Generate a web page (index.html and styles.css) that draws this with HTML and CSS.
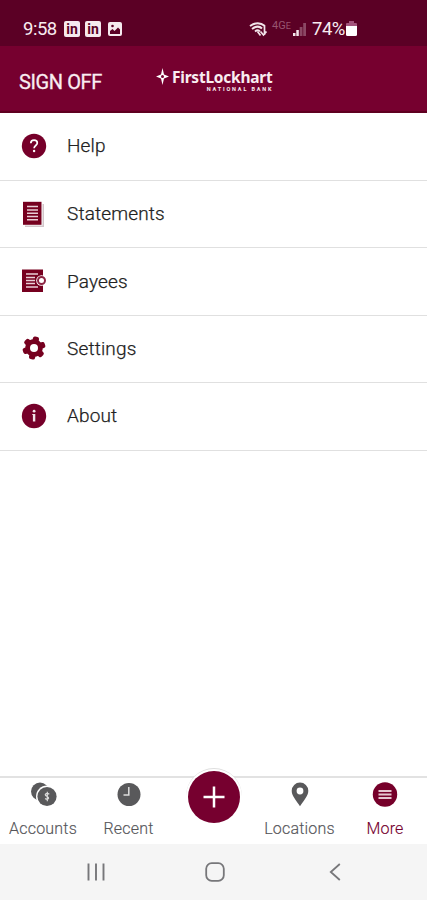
FILE: index.html
```html
<!DOCTYPE html>
<html lang="en">
<head>
<meta charset="utf-8">
<title>More</title>
<link rel="stylesheet" href="styles.css">
</head>
<body>
<div class="status">
  <div class="status-left">
    <span class="time">9:58</span>
    <span class="in-badge">in</span>
    <span class="in-badge">in</span>
    <svg class="photo" width="14" height="14" viewBox="0 0 14 14"><rect width="14" height="14" rx="2" fill="#f6e9ee"/><path d="M2 12V9l2.500-2 2 2L10 5.500l2 2V12z" fill="#5b0025"/><circle cx="4.500" cy="4" r="1.300" fill="#5b0025"/></svg>
  </div>
  <div class="status-right">
    <svg width="19" height="15" viewBox="0 0 19 15" fill="none" stroke="#f3e4ea" stroke-width="2"><path d="M1 4Q9 -1.500 16 4M3 7Q9 2.500 13 6.500M6 9.500Q9 7 11 9.500"/><path d="M8.500 9.500l3 4M15.500 4v9M11.500 9.500l3 3.500 3-3.500" stroke-width="1.700"/></svg>
    <span class="lte">4G<small>E</small></span>
    <svg class="signal" width="14" height="15" viewBox="0 0 14 15"><path d="M0 11h2.500v3H0zM3.300 8h2.500v6H3.300z" fill="#f3e4ea"/><path d="M6.700 5h2.800v9H6.700zM10.200 1H13v13h-2.800z" fill="#8b4864"/></svg>
    <span class="pct">74%</span>
    <svg width="11" height="15" viewBox="0 0 11 15"><path d="M3 0h5v2h2q1 0 1 1v2H0V3q0-1 1-1h2z" fill="#a2527a"/><path d="M0 5h11v8.500q0 1.500-1.500 1.500h-8Q0 15 0 13.500z" fill="#fff"/></svg>
  </div>
</div>
<header class="header">
  <span class="signoff">SIGN OFF</span>
  <div class="logo">
    <svg width="13" height="17" viewBox="0 0 13 17"><path d="M6.500 0l1.500 6.500L13 8.500 8 10.500 6.500 17 5 10.500 0 8.500l5-2z" fill="#fff"/><circle cx="6.500" cy="8.500" r="1.500" fill="#76002f"/></svg>
    <div class="logo-words"><span class="brand">FirstLockhart</span><span class="tag">NATIONAL BANK</span></div>
  </div>
</header>
<ul class="menu">
  <li><svg width="26" height="26" viewBox="0 0 26 26"><circle cx="13" cy="13" r="12.200" fill="#76002a"/><path d="M9.800 10.200C9.800 6 16.300 6.200 16.300 10c0 2.500-3.200 2.500-3.200 5.200" fill="none" stroke="#fff" stroke-width="1.700"/><circle cx="13.100" cy="18" r="1.200" fill="#fff"/></svg><span>Help</span></li>
  <li><svg width="26" height="26" viewBox="0 0 26 26"><path d="M4 3h19v23H4z" fill="#d2c6ca"/><path d="M2 0h19.500v24.500H2z" fill="#fff"/><path d="M2 .8h18.500v23H2z" fill="#76001f"/><path d="M6 5.500h11M6 9h11M6 12.200h11M6 15.400h11M6 18.700h11" stroke="#e8cdd5" stroke-width="1.500"/></svg><span>Statements</span></li>
  <li><svg width="26" height="26" viewBox="0 0 26 26"><path d="M1 1.500h21v22.500H1z" fill="#76001f"/><path d="M5 6h12M5 9.500h9M5 12.500h9M5 15.500h9M5 19h12" stroke="#ead0d7" stroke-width="1.500"/><circle cx="20.500" cy="12.500" r="5.300" fill="#fff"/><circle cx="20.500" cy="12.500" r="3.500" fill="none" stroke="#8c2442" stroke-width="2"/></svg><span>Payees</span></li>
  <li><svg width="26" height="26" viewBox="0 0 26 26"><g fill="#76001f" transform="rotate(12 13 13)"><circle cx="13" cy="13" r="8.800"/><rect x="9.900" y="1.500" width="6.200" height="23" rx="2"/><rect x="9.900" y="1.500" width="6.200" height="23" rx="2" transform="rotate(60 13 13)"/><rect x="9.900" y="1.500" width="6.200" height="23" rx="2" transform="rotate(120 13 13)"/></g><circle cx="13" cy="13" r="4" fill="#fff"/></svg><span>Settings</span></li>
  <li><svg width="26" height="26" viewBox="0 0 26 26"><circle cx="13" cy="13" r="12.200" fill="#76002a"/><path d="M13.100 11v7.500" fill="none" stroke="#f3e4ea" stroke-width="2.400"/><path d="M11.300 11.500h1.500" stroke="#f3e4ea"/><circle cx="13.100" cy="8.200" r="1.400" fill="#f3e4ea"/></svg><span>About</span></li>
</ul>
<nav class="tabs">
  <div class="tab accounts"><svg width="28" height="26" viewBox="0 0 28 26"><circle cx="11" cy="9.500" r="9" fill="#59595b"/><circle cx="18" cy="14.500" r="11" fill="#fff"/><circle cx="18" cy="14.500" r="9.600" fill="#59595b"/><path d="M20.300 12.300q-2.200-1.700-3.800-.2c-1.300 2.200 3.500 2 3.100 4.200q-1.100 1.800-3.500.1M18.300 9.800v9.400" fill="none" stroke="#ddd" stroke-width="1.200"/></svg><span>Accounts</span></div>
  <div class="tab recent"><svg width="28" height="26" viewBox="0 0 28 26"><circle cx="14" cy="12.500" r="11.500" fill="#59595b"/><path d="M13.800 5v8H8.500" fill="none" stroke="#ddd" stroke-width="1.500"/></svg><span>Recent</span></div>
  <div class="tab locations"><svg width="28" height="26" viewBox="0 0 28 26"><path d="M14 24.300C10 18 5.700 14 5.700 8.800a8.300 8.300 0 0 1 16.600 0C22.300 14 18 18 14 24.300z" fill="#59595b"/><circle cx="14" cy="9" r="3.400" fill="#fff"/></svg><span>Locations</span></div>
  <div class="tab more"><svg width="28" height="26" viewBox="0 0 28 26"><circle cx="14" cy="12.500" r="12.200" fill="#76002a"/><path d="M7.500 9h13M7.500 12.500h13M7.500 16h13" stroke="#e5c5d0" stroke-width="1.900"/></svg><span>More</span></div>
  <div class="fab"><svg width="52" height="52" viewBox="0 0 52 52"><path d="M26 15.500v21M15.500 26h21" stroke="#fff" stroke-width="2.500"/></svg></div>
</nav>
<div class="sysnav">
  <svg width="18" height="18" viewBox="0 0 18 18"><path d="M1.500 .5v17M9 .5v17M16.500 .5v17" stroke="#77777a" stroke-width="1.900"/></svg>
  <svg width="20" height="20" viewBox="0 0 20 20"><rect x="1.200" y="1.200" width="17.600" height="17.600" rx="5.500" fill="none" stroke="#77777a" stroke-width="1.800"/></svg>
  <svg width="12" height="18" viewBox="0 0 12 18"><path d="M10.800 1L1.800 9l9 8" fill="none" stroke="#77777a" stroke-width="1.800"/></svg>
</div>
</body>
</html>
```
FILE: styles.css
```css
* { box-sizing: border-box; }
body {
  margin: 0;
  height: 900px;
  display: flex;
  flex-direction: column;
  background: #fff;
  font-family: Roboto, "Liberation Sans", sans-serif;
  overflow: hidden;
}
svg { display: block; flex: none; overflow: visible; }
.status {
  height: 46px;
  flex: none;
  display: flex;
  justify-content: space-between;
  padding: 12px 70px 0 23px;
  background: #5b0025;
  color: #f8ecf0;
}
.status-left, .status-right { display: flex; align-items: center; height: 34px; }
.time { font-size: 18.500px; width: 41px; letter-spacing: -0.500px; }
.in-badge {
  width: 16px;
  height: 16px;
  margin-right: 5px;
  border-radius: 2px;
  background: #f6e9ee;
  color: #5b0025;
  font-size: 14px;
  font-weight: 700;
  line-height: 16px;
  text-align: center;
}
.photo { margin-left: 2px; }
.lte { width: 19px; margin-left: 4px; color: #985570; font-size: 11px; line-height: 12px; margin-bottom: 6px; white-space: nowrap; }
.lte small { font-size: 9px; }
.signal { margin-left: 2px; }
.pct { font-size: 18.500px; width: 34px; margin-left: 5px; letter-spacing: -0.500px; }
.status-right svg:last-child { position: relative; top: -1px; }
.header {
  height: 67px;
  flex: none;
  display: flex;
  padding: 0 0 0 19px;
  background: #76002f;
  border-bottom: 2px solid #5f0020;
  color: #f9edf1;
}
.signoff { width: 137px; font-size: 20px; line-height: 73px; -webkit-text-stroke: 0.300px #f9edf1; letter-spacing: -0.400px; }
.logo { display: flex; gap: 3px; padding-top: 22px; }
.logo-words { display: flex; flex-direction: column; }
.brand { font-family: "Noto Sans", sans-serif; font-weight: 700; font-size: 15.500px; line-height: 18px; letter-spacing: -0.240px; }
.tag { align-self: flex-end; font-size: 5.500px; font-weight: 700; line-height: 6px; letter-spacing: 1.850px; margin-right: -1px; }
.menu { list-style: none; margin: 0; padding: 0; flex: 1; }
.menu li {
  height: 67.400px;
  display: flex;
  align-items: center;
  gap: 20px;
  padding: 0 0 1px 21px;
  border-bottom: 1.500px solid #e0e0e0;
  color: #222;
  font-size: 19px;
  font-weight: 300;
  -webkit-text-stroke: 0.250px #222;
  letter-spacing: 0.150px;
}
.menu li:first-child { height: 68px; padding-bottom: 2px; }
.tabs {
  position: relative;
  height: 68px;
  flex: none;
  display: flex;
  border-top: 2px solid #e2e2e2;
}
.tab {
  display: flex;
  flex-direction: column;
  align-items: center;
  padding-top: 4px;
  gap: 11px;
  color: #555559;
  font-size: 16px;
  font-weight: 300;
  -webkit-text-stroke: 0.150px currentColor;
  line-height: 20px;
  letter-spacing: 0.200px;
}
.accounts { width: 86px; }
.recent { width: 85px; }
.locations { width: 87px; margin-left: 85px; }
.more { width: 84px; color: #76002f; }
.fab {
  position: absolute;
  left: 186px;
  top: -10px;
  width: 56px;
  height: 57px;
  border-radius: 50%;
  background: #fff;
  border-top: 1px solid #dedede;
  padding: 2px 2px 3px;
}
.fab svg { border-radius: 50%; background: #76002f; }
.sysnav {
  height: 56px;
  flex: none;
  display: flex;
  align-items: center;
  background: #f5f5f5;
  padding-left: 87px;
  gap: 100px;
}
.sysnav svg:last-child { margin-left: 4px; }
```
